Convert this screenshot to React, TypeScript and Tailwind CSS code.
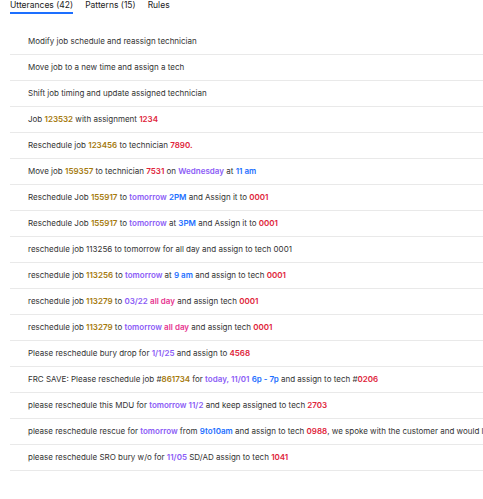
import React from "react";

type Seg = [string, string?];

const C = {
  job: "text-[#a57a0d] font-semibold",
  tech: "text-[#e0243a] font-semibold",
  date: "text-[#8b5cf6] font-semibold",
  time: "text-[#1d6fff] font-semibold",
  day: "text-[#e6338f] font-semibold",
};

const rows: Seg[][] = [
  [["Modify job schedule and reassign technician"]],
  [["Move job to a new time and assign a tech"]],
  [["Shift job timing and update assigned technician"]],
  [["Job "], ["123532", C.job], [" with assignment "], ["1234", C.tech]],
  [["Reschedule job "], ["123456", C.job], [" to technician "], ["7890.", C.tech]],
  [["Move job "], ["159357", C.job], [" to technician "], ["7531", C.tech], [" on "], ["Wednesday", C.date], [" at "], ["11 am", C.time]],
  [["Reschedule Job "], ["155917", C.job], [" to "], ["tomorrow", C.date], [" "], ["2PM", C.time], [" and Assign it to "], ["0001", C.tech]],
  [["Reschedule Job "], ["155917", C.job], [" to "], ["tomorrow", C.date], [" at "], ["3PM", C.time], [" and Assign it to "], ["0001", C.tech]],
  [["reschedule job 113256 to tomorrow for all day and assign to tech 0001"]],
  [["reschedule job "], ["113256", C.job], [" to "], ["tomorrow", C.date], [" at "], ["9 am", C.time], [" and assign to tech "], ["0001", C.tech]],
  [["reschedule job "], ["113279", C.job], [" to "], ["03/22", C.date], [" "], ["all day", C.day], [" and assign tech "], ["0001", C.tech]],
  [["reschedule job "], ["113279", C.job], [" to "], ["tomorrow", C.date], [" "], ["all day", C.day], [" and assign tech "], ["0001", C.tech]],
  [["Please reschedule bury drop for "], ["1/1/25", C.date], [" and assign to "], ["4568", C.tech]],
  [["FRC SAVE: Please reschedule job #"], ["861734", C.job], [" for "], ["today, 11/01", C.date], [" "], ["6p - 7p", C.time], [" and assign to tech #"], ["0206", C.tech]],
  [["please reschedule this MDU for "], ["tomorrow 11/2", C.date], [" and keep assigned to tech "], ["2703", C.tech]],
  [["please reschedule rescue for "], ["tomorrow", C.date], [" from "], ["9to10am", C.time], [" and assign to tech "], ["0988", C.tech], [", we spoke with the customer and would like to come tomorrow"]],
  [["please reschedule SRO bury w/o for "], ["11/05", C.date], [" SD/AD assign to tech "], ["1041", C.tech]],
];

export default function App() {
  return (
    <div className="w-full h-screen overflow-hidden bg-white font-['Inter',sans-serif]">
      <div className="ml-[10px] flex gap-[12px] text-[8.5px] leading-[10px] text-[#222]">
        <div className="pb-[2px] border-b-2 border-[#1d6fff]">Utterances (42)</div>
        <div className="pb-[2px]">Patterns (15)</div>
        <div className="pb-[2px]">Rules</div>
      </div>
      <div className="mt-[15px] ml-[10px] w-[700px]">
        {rows.map((r, i) => (
          <div
            key={i}
            className="h-[26px] leading-[25px] pl-[18px] border-b border-[#e9e9e9] text-[8px] text-[#333] whitespace-nowrap"
          >
            {r.map(([t, cls], j) => (
              <span key={j} className={cls ?? ""}>
                {t}
              </span>
            ))}
          </div>
        ))}
      </div>
    </div>
  );
}
